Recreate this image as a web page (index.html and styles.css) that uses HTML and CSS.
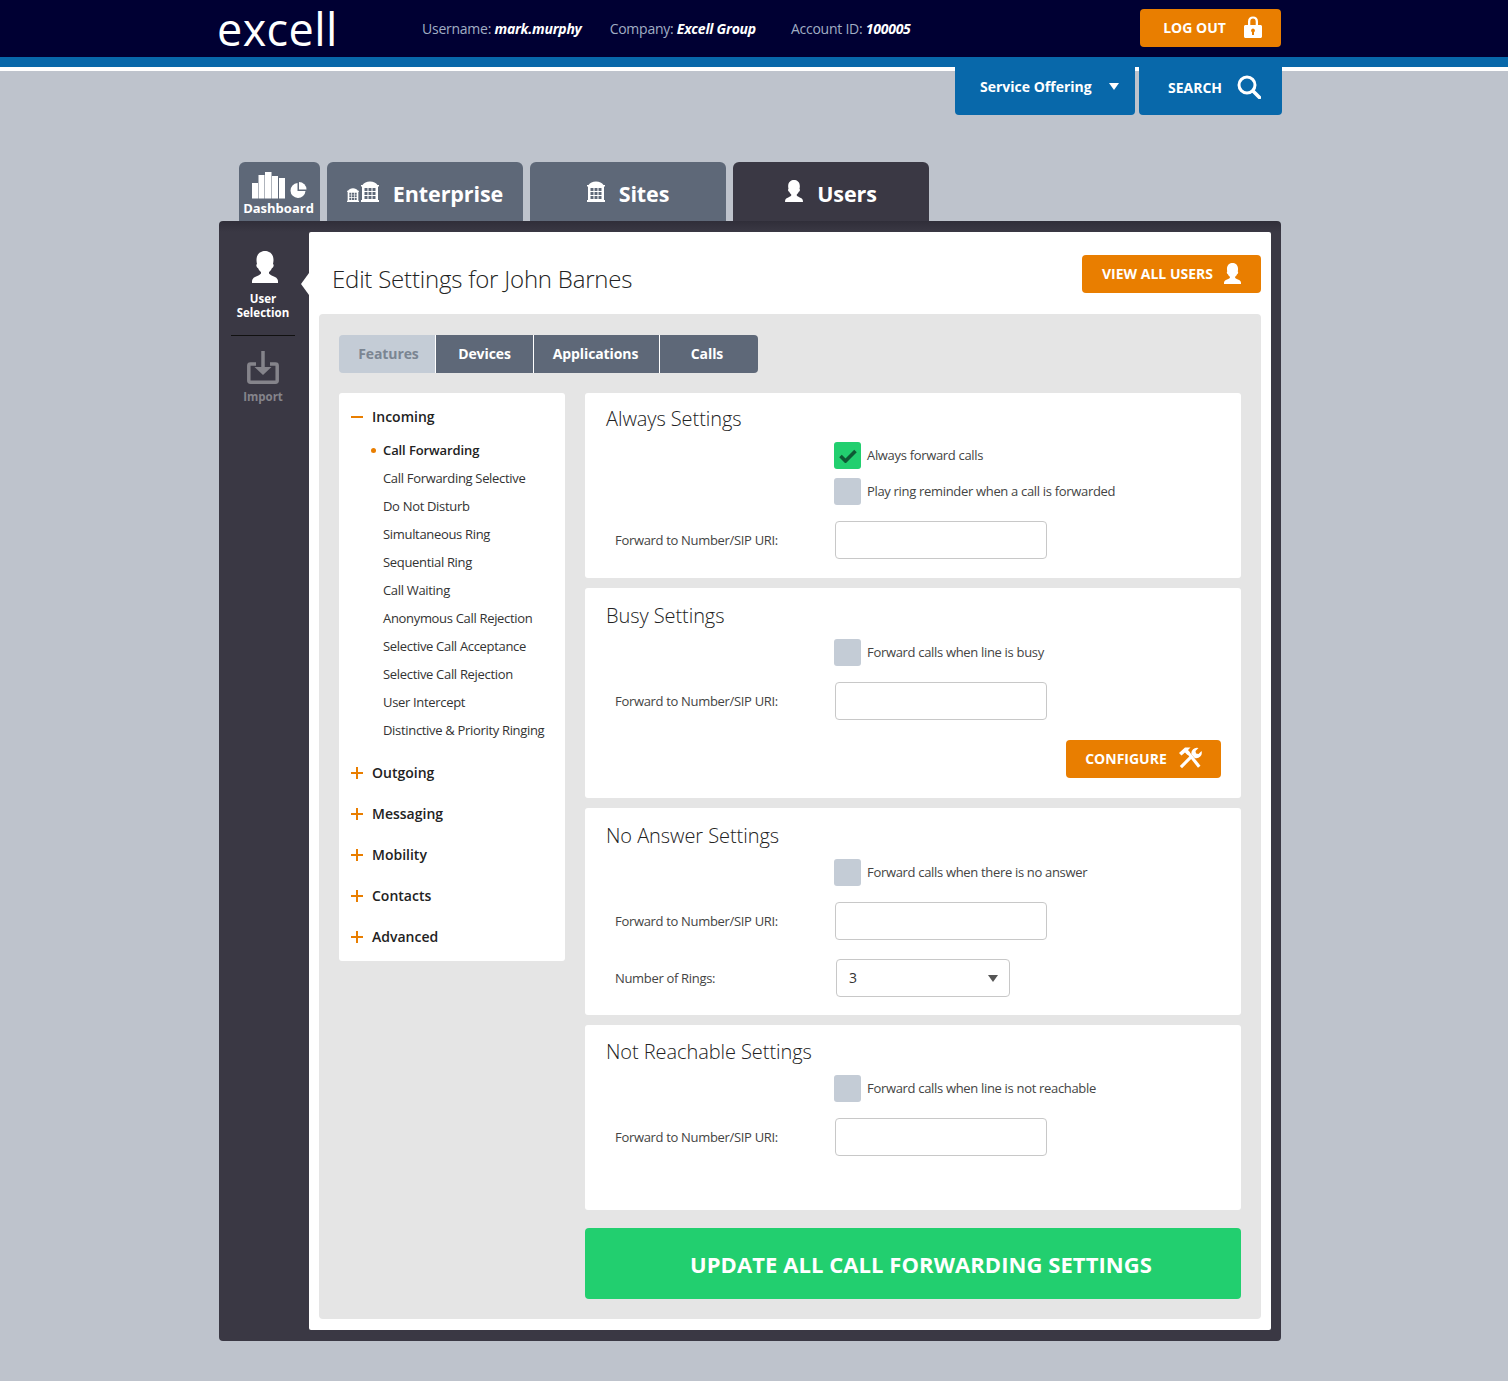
FILE: index.html
```html
<!DOCTYPE html>
<html lang="en">
<head>
  <meta charset="UTF-8" />
  <title>Excell - Edit Settings</title>
  <link rel="stylesheet" href="styles.css">
</head>
<body>

  <svg class="icon-defs" width="0" height="0" aria-hidden="true">
    <symbol id="i-person" viewBox="0 0 26 32">
      <path d="M13 0C9 0 4.500 2.500 4.500 9c0 1.500.3 3 .5 4-.8.3-.8 1.500-.4 2.500S5.500 17 6 17c.7 1.700 1.600 3 3 4v1.500c-1 1.500-4 2.500-6 3.500-2 1-3 2.500-3 4.500V32h26v-1.500c0-2-1-3.500-3-4.500-2-1-5-2-6-3.500V21c1.400-1 2.300-2.300 3-4 .5 0 1-.5 1.400-1.500s.4-2.200-.4-2.500c.2-1 .5-2.500.5-4C21.500 2.500 17 0 13 0z"/>
    </symbol>
    <symbol id="i-building" viewBox="0 0 18 21">
      <path fill-rule="evenodd" d="M0 4h1.500C3 2 5.500.5 9 .5S15 2 16.500 4H18v1.500h-1V19h1v2H0v-2h1V5.500H0zM3.500 7v3h3V7zm4 0v3h3V7zm4 0v3h3V7zm-8 4v3h3v-3zm4 0v3h3v-3zm4 0v3h3v-3zm-8 4v3h3v-3zm4 0v3h3v-3zm4 0v3h3v-3z"/>
    </symbol>
  </svg>

  <header class="topbar">
    <div class="wrap topbar-inner">
      <div class="logo">excell</div>
      <div class="acct">Username: <b>mark.murphy</b></div>
      <div class="acct">Company: <b>Excell Group</b></div>
      <div class="acct acct-id">Account ID: <b>100005</b></div>
      <a class="btn btn-logout" href="#">LOG OUT
        <svg class="ico-lock" viewBox="0 0 18 22"><path fill-rule="evenodd" d="M4 9V5.500C4 2.300 6 .5 9 .5s5 1.800 5 5V9h2.500c.8 0 1.500.7 1.500 1.500v10c0 .8-.7 1.500-1.500 1.500h-15C.7 22 0 21.300 0 20.500v-10C0 9.700.7 9 1.500 9zm2.300 0h5.400V5.500c0-1.900-1-2.900-2.700-2.900S6.300 3.600 6.300 5.500zM9 12.500a2 2 0 0 0-1 3.700V19h2v-2.800a2 2 0 0 0-1-3.700z"/></svg>
      </a>
    </div>
  </header>
  <div class="blue-bar"></div>

  <div class="wrap subnav">
    <a class="subnav-btn subnav-service" href="#">Service Offering <span class="caret"></span></a>
    <a class="subnav-btn subnav-search" href="#">SEARCH
      <svg class="ico-search" viewBox="0 0 24 24" fill="none" stroke="#fff"><circle cx="10" cy="10" r="8" stroke-width="3"/><path d="M16 16l6.500 6.500" stroke-width="3.600" stroke-linecap="round"/></svg>
    </a>
  </div>

  <nav class="wrap main-tabs">
    <a class="tab tab-dash" href="#">
      <svg class="ico-dash" viewBox="0 0 56 27" fill="#fff">
        <rect x="1" y="11" width="6" height="15.500"/><rect x="7.500" y="3" width="6" height="23.500"/><rect x="14" y="0" width="6.500" height="26.500"/><rect x="21" y="4" width="6" height="22.500"/><rect x="28" y="6" width="6" height="20.500"/>
        <path d="M46.500 11a7.500 7.500 0 1 0 8 8h-8z"/><path d="M48 10a7.500 7.500 0 0 1 7.500 7.500H48z"/>
      </svg>
      <span>Dashboard</span>
    </a>
    <a class="tab" href="#">
      <svg class="ico-ent" viewBox="0 0 32 21" fill="#fff"><use href="#i-building" x="14" width="18" height="21"/><use href="#i-building" x="0" y="7" width="12" height="14"/></svg>
      Enterprise
    </a>
    <a class="tab" href="#">
      <svg class="ico-site" fill="#fff"><use href="#i-building"/></svg>
      Sites
    </a>
    <a class="tab tab-on" href="#">
      <svg class="ico-user" fill="#fff"><use href="#i-person"/></svg>
      Users
    </a>
  </nav>

  <main class="wrap panel">
    <aside class="side">
      <a class="side-item side-on" href="#">
        <svg class="ico-side-user" fill="#fff"><use href="#i-person"/></svg>
        <span>User<br>Selection</span>
      </a>
      <div class="side-line"></div>
      <a class="side-item side-off" href="#">
        <svg class="ico-import" viewBox="0 0 32 33" fill="none" stroke="#85848b" stroke-width="3.500">
          <path d="M9 13H3.500c-1 0-1.700.7-1.700 1.700v14.800c0 1 .7 1.700 1.700 1.700h25c1 0 1.700-.7 1.700-1.700V14.700c0-1-.7-1.700-1.700-1.700H23"/>
          <path d="M16 0v17"/><path d="M7.500 16h17L16 24z" fill="#85848b" stroke="none"/>
        </svg>
        <span>Import</span>
      </a>
    </aside>

    <section class="sheet">
      <div class="sheet-head">
        <h1>Edit Settings for John Barnes</h1>
        <a class="btn btn-users" href="#">VIEW ALL USERS
          <svg class="ico-btn-user" fill="#fff"><use href="#i-person"/></svg>
        </a>
      </div>

      <div class="sheet-body">
        <div class="pills">
          <a class="pill pill-on" href="#">Features</a>
          <a class="pill pill-dev" href="#">Devices</a>
          <a class="pill pill-app" href="#">Applications</a>
          <a class="pill pill-calls" href="#">Calls</a>
        </div>

        <div class="columns">
          <div class="menu">
            <div class="menu-head menu-open"><span class="sign sign-minus"></span>Incoming</div>
            <ul class="menu-list">
              <li class="menu-active">Call Forwarding</li>
              <li>Call Forwarding Selective</li>
              <li>Do Not Disturb</li>
              <li>Simultaneous Ring</li>
              <li>Sequential Ring</li>
              <li>Call Waiting</li>
              <li>Anonymous Call Rejection</li>
              <li>Selective Call Acceptance</li>
              <li>Selective Call Rejection</li>
              <li>User Intercept</li>
              <li>Distinctive &amp; Priority Ringing</li>
            </ul>
            <div class="menu-head"><span class="sign sign-plus"></span>Outgoing</div>
            <div class="menu-head"><span class="sign sign-plus"></span>Messaging</div>
            <div class="menu-head"><span class="sign sign-plus"></span>Mobility</div>
            <div class="menu-head"><span class="sign sign-plus"></span>Contacts</div>
            <div class="menu-head"><span class="sign sign-plus"></span>Advanced</div>
          </div>

          <div class="forms">
            <div class="card card-always">
              <h2>Always Settings</h2>
              <div class="check-row"><span class="check check-on"><svg viewBox="0 0 18 14" fill="none" stroke="#0e5a34" stroke-width="3.600"><path d="M1.500 7l5 5 10-10"/></svg></span>Always forward calls</div>
              <div class="check-row"><span class="check"></span>Play ring reminder when a call is forwarded</div>
              <div class="field-row"><label>Forward to Number/SIP URI:</label><input class="text-input" type="text"></div>
            </div>

            <div class="card card-busy">
              <h2>Busy Settings</h2>
              <div class="check-row"><span class="check"></span>Forward calls when line is busy</div>
              <div class="field-row"><label>Forward to Number/SIP URI:</label><input class="text-input" type="text"></div>
              <div class="card-actions">
                <a class="btn btn-config" href="#">CONFIGURE
                  <svg class="ico-tools" viewBox="0 0 24 24" fill="#fff">
                    <path d="M1 7l6-5.500h5.500L10 4l2 2.500L9.500 9 7 6.500 3.500 9.500z"/>
                    <path d="M8.300 6.800l2.400-1.900L22.500 19.800 20 21.800z"/>
                    <path d="M1.800 20L13 8.800l2.200 2.200L4 22.200z"/>
                    <path d="M13.500 8.500a5.500 5.500 0 0 1 7-6.500l-3 3 .5 2.500 2.500.5 3-3a5.500 5.500 0 0 1-6.800 7z"/>
                  </svg>
                </a>
              </div>
            </div>

            <div class="card card-noans">
              <h2>No Answer Settings</h2>
              <div class="check-row"><span class="check"></span>Forward calls when there is no answer</div>
              <div class="field-row"><label>Forward to Number/SIP URI:</label><input class="text-input" type="text"></div>
              <div class="field-row rings-row"><label>Number of Rings:</label><div class="fake-select">3<span class="caret caret-dark"></span></div></div>
            </div>

            <div class="card card-unreach">
              <h2>Not Reachable Settings</h2>
              <div class="check-row"><span class="check"></span>Forward calls when line is not reachable</div>
              <div class="field-row"><label>Forward to Number/SIP URI:</label><input class="text-input" type="text"></div>
            </div>

            <a class="btn-update" href="#">UPDATE ALL CALL FORWARDING SETTINGS</a>
          </div>
        </div>
      </div>
    </section>
  </main>

</body>
</html>
```

FILE: styles.css
```css
/* base */
body {
  margin: 0;
  min-height: 1381px;
  background-color: #bec3cc;
  font-family: "Open Sans", "Liberation Sans", sans-serif;
  color: #333;
}

a {
  text-decoration: none;
  color: inherit;
}

.icon-defs {
  position: absolute;
}

.wrap {
  width: 1062px;
  margin-left: 219px;
  box-sizing: border-box;
}

/* top bar */
.topbar {
  height: 57px;
  background-color: #000033;
}

.topbar-inner {
  display: flex;
  align-items: center;
  height: 57px;
}

.logo {
  width: 203px;
  font-size: 45px;
  font-weight: 400;
  line-height: 57px;
  color: #fff;
  letter-spacing: 0.4px;
  text-indent: -2px;
}

.acct {
  margin-right: 28px;
  font-size: 14px;
  color: #a0aec4;
  letter-spacing: -0.25px;
}

.acct b {
  color: #fff;
  font-style: italic;
  font-weight: 700;
}

.acct-id {
  margin-left: 7px;
}

.btn {
  display: flex;
  align-items: center;
  justify-content: center;
  height: 38px;
  padding-bottom: 2px;
  box-sizing: border-box;
  border-radius: 4px;
  background-color: #e97e00;
  color: #fff;
  font-size: 14px;
  font-weight: 700;
}

.btn-logout {
  width: 141px;
  margin-left: auto;
  margin-top: -1px;
  padding-left: 4px;
  gap: 18px;
}

.ico-lock {
  width: 18px;
  height: 22px;
  fill: #fff;
}

.blue-bar {
  height: 10px;
  background-color: #0868aa;
  border-bottom: 4px solid #fff;
}

/* service + search */
.subnav {
  display: flex;
  justify-content: flex-end;
  gap: 4px;
  width: 1063px;
  height: 48px;
  margin-top: -4px;
}

.subnav-btn {
  display: flex;
  align-items: center;
  padding-bottom: 8px;
  background-color: #0868aa;
  border-radius: 0 0 4px 4px;
  color: #fff;
  font-size: 14px;
  font-weight: 700;
  box-sizing: border-box;
}

.subnav-service {
  width: 180px;
  padding-left: 25px;
  padding-bottom: 9px;
  gap: 17px;
}

.subnav-search {
  width: 143px;
  padding-left: 29px;
  gap: 15px;
}

.caret {
  display: inline-block;
  width: 0;
  height: 0;
  border-left: 5.500px solid transparent;
  border-right: 5.500px solid transparent;
  border-top: 7px solid #fff;
}

.ico-search {
  width: 24px;
  height: 24px;
}

/* big tabs */
.main-tabs {
  display: flex;
  gap: 7px;
  height: 59px;
  margin-top: 47px;
  padding-left: 20px;
}

.tab {
  display: flex;
  align-items: center;
  justify-content: center;
  gap: 14px;
  width: 196px;
  padding-top: 4px;
  box-sizing: border-box;
  background-color: #5e6878;
  border-radius: 6px 6px 0 0;
  color: #fff;
  font-size: 21.500px;
  font-weight: 700;
  letter-spacing: -0.1px;
}

.tab-on {
  background-color: #3a3844;
}

.tab-dash {
  flex-direction: column;
  gap: 1px;
  width: 81px;
  font-size: 13px;
  font-weight: 700;
  letter-spacing: 0;
  padding-top: 5px;
  padding-right: 2px;
}

.tab-dash span {
  line-height: 16px;
}

.ico-dash {
  width: 56px;
  height: 27px;
}

.ico-ent {
  width: 32px;
  height: 21px;
  margin-top: -4px;
}

.ico-site {
  width: 18px;
  height: 21px;
  margin-top: -4px;
}

.ico-user {
  width: 18px;
  height: 22px;
  margin-top: -5px;
}

/* main panel */
.panel {
  display: flex;
  height: 1120px;
  padding: 11px 10px 11px 0;
  background: linear-gradient(#302e39, #3a3844 11px);
  border-radius: 4px;
}

.side {
  width: 90px;
  flex-shrink: 0;
  padding-top: 19px;
  box-sizing: border-box;
}

.side-item {
  display: flex;
  flex-direction: column;
  align-items: center;
  font-size: 11.500px;
  font-weight: 700;
  line-height: 14px;
  text-align: center;
}

.side-on {
  color: #fff;
  position: relative;
  padding-right: 2px;
}

.side-on::after {
  content: "";
  position: absolute;
  right: 0;
  top: 22px;
  border-top: 11px solid transparent;
  border-bottom: 11px solid transparent;
  border-right: 8px solid #fff;
}

.ico-side-user {
  width: 26px;
  height: 32px;
  margin-bottom: 9px;
  margin-left: 3px;
}

.side-line {
  width: 64px;
  height: 1px;
  margin: 15px 0 15px 12px;
  background-color: #111;
}

.side-off {
  color: #85848b;
  padding-right: 2px;
}

.ico-import {
  width: 32px;
  height: 33px;
  margin-bottom: 6px;
}

/* white sheet */
.sheet {
  flex: 1;
  padding: 0 10px 11px;
  background-color: #fff;
  border-radius: 2px;
  box-sizing: border-box;
}

.sheet-head {
  display: flex;
  align-items: flex-start;
  justify-content: space-between;
  height: 82px;
  padding: 23px 0 0 13px;
  box-sizing: border-box;
}

.sheet-head h1 {
  margin: 0;
  padding-top: 8px;
  font-size: 24px;
  line-height: 32px;
  font-weight: 300;
  color: #222;
  letter-spacing: -0.2px;
}

.btn-users {
  width: 179px;
  gap: 11px;
}

.ico-btn-user {
  width: 17px;
  height: 21px;
}

.sheet-body {
  height: 1005px;
  padding: 21px 20px 0;
  background-color: #e5e5e5;
  border-radius: 4px;
  box-sizing: border-box;
}

/* features / devices pills */
.pills {
  display: flex;
  height: 38px;
  margin-bottom: 20px;
}

.pill {
  display: flex;
  align-items: center;
  justify-content: center;
  padding-bottom: 2px;
  box-sizing: border-box;
  background-color: #5e6878;
  color: #fff;
  font-size: 14px;
  font-weight: 700;
  letter-spacing: -0.1px;
  border-left: 1px solid #fff;
}

.pill-on {
  width: 96px;
  padding-left: 3px;
  background-color: #c4ccd6;
  color: #7b8592;
  border-left: 0;
  border-radius: 4px 0 0 4px;
}

.pill-dev {
  width: 98px;
}

.pill-app {
  width: 126px;
  padding-right: 2px;
}

.pill-calls {
  width: 99px;
  padding-right: 4px;
  border-radius: 0 4px 4px 0;
}

.columns {
  display: flex;
  align-items: flex-start;
  gap: 20px;
}

/* left menu */
.menu {
  width: 226px;
  height: 568px;
  padding: 11px 12px 0;
  background-color: #fff;
  border-radius: 3px;
  box-sizing: border-box;
}

.menu-head {
  display: flex;
  align-items: center;
  gap: 9px;
  height: 24px;
  margin-bottom: 17px;
  font-size: 14px;
  font-weight: 600;
  color: #222;
}

.menu-open {
  margin-bottom: 8px;
}

.sign {
  position: relative;
  width: 12px;
  height: 2px;
  margin-top: 2px;
  background-color: #e97e00;
}

.sign-plus::after {
  content: "";
  position: absolute;
  left: 5px;
  top: -5px;
  width: 2px;
  height: 12px;
  background-color: #e97e00;
}

.menu-list {
  list-style: none;
  margin: 0 0 16px;
  padding: 0 0 0 32px;
  font-size: 13px;
  color: #333;
}

.menu-list li {
  height: 28px;
  line-height: 28px;
  letter-spacing: -0.32px;
  white-space: nowrap;
}

.menu-list .menu-active {
  position: relative;
  font-weight: 600;
  color: #222;
  letter-spacing: -0.1px;
}

.menu-active::before {
  content: "";
  position: absolute;
  left: -12px;
  top: 12px;
  width: 5px;
  height: 5px;
  border-radius: 50%;
  background-color: #e97e00;
}

/* setting cards */
.forms {
  width: 656px;
  display: flex;
  flex-direction: column;
  gap: 10px;
}

.card {
  padding: 14px 20px 0 21px;
  background-color: #fff;
  border-radius: 3px;
  box-sizing: border-box;
}

.card h2 {
  margin: 0 0 9px;
  font-size: 20px;
  line-height: 28px;
  font-weight: 300;
  color: #222;
  letter-spacing: -0.07px;
}

.card-always {
  height: 185px;
  padding-top: 12px;
}

.card-busy {
  height: 210px;
}

.card-noans {
  height: 207px;
}

.card-unreach {
  height: 185px;
  padding-top: 13px;
}

.check-row {
  display: flex;
  align-items: flex-start;
  gap: 6px;
  height: 27px;
  margin-bottom: 9px;
  padding-left: 228px;
  font-size: 13px;
  line-height: 27px;
  color: #444;
  letter-spacing: -0.32px;
}

.check {
  display: flex;
  align-items: center;
  justify-content: center;
  width: 27px;
  height: 27px;
  background-color: #c4ccd6;
  border-radius: 3px;
}

.check-on {
  background-color: #22cf6f;
}

.check-on svg {
  width: 18px;
  height: 14px;
}

.field-row {
  display: flex;
  align-items: center;
  margin-top: 16px;
  font-size: 13px;
  color: #444;
  letter-spacing: -0.32px;
}

.field-row label {
  width: 220px;
  padding-left: 9px;
}

.text-input {
  width: 212px;
  height: 38px;
  padding: 0 10px;
  background-color: #fff;
  border: 1px solid #c8c8c8;
  border-radius: 4px;
  box-sizing: border-box;
}

.rings-row {
  margin-top: 19px;
}

.fake-select {
  display: flex;
  align-items: center;
  justify-content: space-between;
  width: 174px;
  height: 38px;
  margin-left: 1px;
  padding: 0 11px 2px 12px;
  border: 1px solid #c8c8c8;
  border-radius: 4px;
  box-sizing: border-box;
  font-size: 14px;
  color: #333;
  letter-spacing: 0;
}

.caret-dark {
  border-top-color: #555;
  margin-top: 2px;
}

.card-actions {
  display: flex;
  justify-content: flex-end;
  margin-top: 20px;
}

.btn-config {
  width: 155px;
  gap: 11px;
}

.ico-tools {
  width: 24px;
  height: 24px;
}

.btn-update {
  display: flex;
  align-items: center;
  justify-content: center;
  height: 71px;
  margin-top: 8px;
  padding-left: 16px;
  background-color: #22cf6f;
  border-radius: 4px;
  color: #fff;
  font-size: 22px;
  font-weight: 700;
  letter-spacing: 0.07px;
  box-sizing: border-box;
}
```
